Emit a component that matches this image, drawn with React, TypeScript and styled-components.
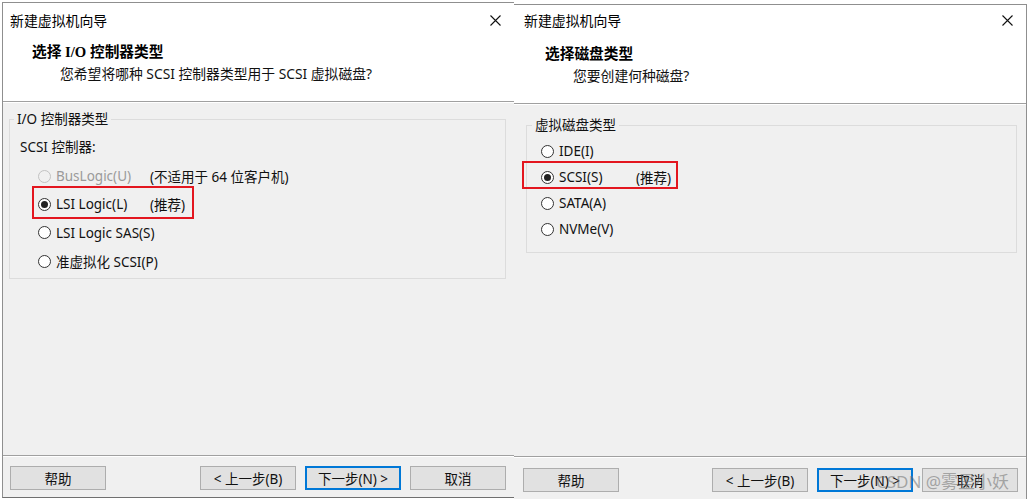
import React from 'react'
import styled, { createGlobalStyle, css } from 'styled-components'

const GlobalStyle = createGlobalStyle`
  html, body {
    margin: 0;
    background: #fff;
  }
  body {
    font-family: "Noto Sans", "Noto Sans CJK SC", sans-serif;
    font-size: 13.5px;
    color: #111;
  }
`

type Rect = { left: number; top: number; width: number; height: number }

type Option = {
    label: string
    note?: string
    checked?: boolean
    disabled?: boolean
    highlight?: Rect
}

type Wizard = {
    top: number
    left: number
    width: number
    height: number
    edges: { left: boolean; right: boolean; bottom: boolean }
    titleHeight: number
    headingGap: number
    headingIndent: number
    subIndent: number
    heading: string
    subtitle: string
    bodyTop: number
    groupInset: number
    groupWidth: number
    groupHeight: number
    legendInset: number
    legend: string
    caption?: string
    rowsTop: number
    rowIndent: number
    rowHeight: number
    labelWidth: number
    options: Option[]
    footerHeight: number
    footerTop: number
    footerSide: number
}

const wizards: Wizard[] = [
    {
        top: 2,
        left: 2,
        width: 512,
        height: 496,
        edges: { left: true, right: false, bottom: true },
        titleHeight: 34,
        headingGap: 5,
        headingIndent: 29,
        subIndent: 57,
        heading: '选择 I/O 控制器类型',
        subtitle: '您希望将哪种 SCSI 控制器类型用于 SCSI 虚拟磁盘?',
        bodyTop: 7,
        groupInset: 6,
        groupWidth: 497,
        groupHeight: 169,
        legendInset: 4,
        legend: 'I/O 控制器类型',
        caption: 'SCSI 控制器:',
        rowsTop: 5,
        rowIndent: 28,
        rowHeight: 28.3,
        labelWidth: 94,
        options: [
            { label: 'BusLogic(U)', note: '(不适用于 64 位客户机)', disabled: true },
            {
                label: 'LSI Logic(L)',
                note: '(推荐)',
                checked: true,
                highlight: { left: 22, top: -4, width: 162, height: 33 },
            },
            { label: 'LSI Logic SAS(S)' },
            { label: '准虚拟化 SCSI(P)' },
        ],
        footerHeight: 42,
        footerTop: 9,
        footerSide: 7,
    },
    {
        top: 4,
        left: 0,
        width: 513,
        height: 495,
        edges: { left: false, right: true, bottom: false },
        titleHeight: 30,
        headingGap: 9,
        headingIndent: 31,
        subIndent: 59,
        heading: '选择磁盘类型',
        subtitle: '您要创建何种磁盘?',
        bodyTop: 11,
        groupInset: 12,
        groupWidth: 491,
        groupHeight: 137,
        legendInset: 5,
        legend: '虚拟磁盘类型',
        rowsTop: 4,
        rowIndent: 14,
        rowHeight: 26,
        labelWidth: 77,
        options: [
            { label: 'IDE(I)' },
            {
                label: 'SCSI(S)',
                note: '(推荐)',
                checked: true,
                highlight: { left: -5, top: -3, width: 156, height: 28 },
            },
            { label: 'SATA(A)' },
            { label: 'NVMe(V)' },
        ],
        footerHeight: 43,
        footerTop: 10,
        footerSide: 9,
    },
]

const Page = styled.div`
    position: relative;
    display: flex;
    align-items: flex-start;
    width: 1028px;
    height: 499px;
    overflow: hidden;
`

const Frame = styled.div<{ $w: Wizard }>`
    display: flex;
    flex-direction: column;
    box-sizing: border-box;
    margin-top: ${p => p.$w.top}px;
    margin-left: ${p => p.$w.left}px;
    width: ${p => p.$w.width}px;
    height: ${p => p.$w.height}px;
    background: #f0f0f0;
    border-top: 1px solid #8f8f8f;
    border-left: ${p => (p.$w.edges.left ? '1px solid #8f8f8f' : 'none')};
    border-right: ${p => (p.$w.edges.right ? '1px solid #8f8f8f' : 'none')};
    border-bottom: ${p => (p.$w.edges.bottom ? '1px solid #6f6f6f' : 'none')};
`

const Header = styled.div`
    display: flex;
    flex-direction: column;
    height: 99px;
    box-sizing: border-box;
    background: #fff;
    border-bottom: 1px solid #a0a0a0;
`

const TitleBar = styled.div<{ $h: number; $pad: number }>`
    display: flex;
    align-items: center;
    justify-content: space-between;
    height: ${p => p.$h}px;
    padding: 0 13px 0 ${p => p.$pad}px;
    font-size: 13.9px;
    color: #000;
`

const CloseIcon = () => (
    <svg width="11" height="11" viewBox="0 0 11 11">
        <path d="M0.5 0.5 L10.5 10.5 M10.5 0.5 L0.5 10.5" stroke="#111" strokeWidth="1.1" />
    </svg>
)

const Heading = styled.div<{ $gap: number; $indent: number }>`
    margin-top: ${p => p.$gap}px;
    padding-left: ${p => p.$indent}px;
    line-height: 20px;
    font-family: "Liberation Serif", "Noto Sans CJK SC", serif;
    font-weight: bold;
    font-size: 14.7px;
    color: #000;
`

const Subtitle = styled.div<{ $indent: number }>`
    margin-top: 2px;
    padding-left: ${p => p.$indent}px;
    line-height: 20px;
    font-size: 13.8px;
    color: #111;
`

const Body = styled.div<{ $top: number }>`
    flex: 1;
    border-top: 1px solid #fff;
    padding-top: ${p => p.$top}px;
`

const Group = styled.fieldset<{ $inset: number; $width: number; $height: number }>`
    box-sizing: border-box;
    margin: 0 0 0 ${p => p.$inset}px;
    padding: 0;
    width: ${p => p.$width}px;
    height: ${p => p.$height}px;
    border: 1px solid #dcdcdc;
    min-width: 0;
`

const Legend = styled.legend<{ $inset: number }>`
    margin-left: ${p => p.$inset}px;
    padding: 0 3px;
    line-height: 18px;
    color: #111;
`

const Caption = styled.div`
    margin: 9px 0 0 10px;
    line-height: 20px;
`

const Rows = styled.div<{ $top: number }>`
    display: flex;
    flex-direction: column;
    margin-top: ${p => p.$top}px;
`

const Row = styled.div<{ $indent: number; $h: number; $hl?: Rect }>`
    position: relative;
    display: flex;
    align-items: center;
    height: ${p => p.$h}px;
    padding-left: ${p => p.$indent}px;
    ${p =>
        p.$hl &&
        css`
            &::after {
                content: '';
                position: absolute;
                box-sizing: border-box;
                left: ${p.$hl.left}px;
                top: ${p.$hl.top}px;
                width: ${p.$hl.width}px;
                height: ${p.$hl.height}px;
                border: 2px solid #e3161f;
                pointer-events: none;
            }
        `}
`

const Radio = styled.span<{ $checked?: boolean; $disabled?: boolean }>`
    position: relative;
    box-sizing: border-box;
    flex: none;
    width: 13px;
    height: 13px;
    border-radius: 50%;
    border: 1px solid ${p => (p.$disabled ? '#c2c2c2' : '#333')};
    background: ${p => (p.$disabled ? '#f0f0f0' : '#fff')};
    margin-right: 5px;
    ${p =>
        p.$checked &&
        css`
            &::after {
                content: '';
                position: absolute;
                left: 2px;
                top: 2px;
                width: 7px;
                height: 7px;
                border-radius: 50%;
                background: #222;
            }
        `}
`

const Label = styled.span<{ $width: number; $disabled?: boolean }>`
    width: ${p => p.$width}px;
    white-space: nowrap;
    color: ${p => (p.$disabled ? '#9a9a9a' : '#111')};
`

const Note = styled.span`
    white-space: nowrap;
    color: #111;
`

const Footer = styled.div<{ $h: number; $top: number; $side: number }>`
    display: flex;
    align-items: flex-start;
    gap: 9px;
    box-sizing: border-box;
    height: ${p => p.$h}px;
    border-top: 1px solid #a0a0a0;
    box-shadow: inset 0 1px 0 #fff;
    padding: ${p => p.$top + 1}px 8px 0 ${p => p.$side}px;
`

const Spacer = styled.div`
    flex: 1;
`

const Button = styled.button<{ $primary?: boolean }>`
    box-sizing: border-box;
    width: 96px;
    height: 24px;
    padding: 0;
    font: inherit;
    font-size: 13.5px;
    color: #111;
    background: #e1e1e1;
    border: 1px solid ${p => (p.$primary ? '#0078d7' : '#adadad')};
    box-shadow: ${p => (p.$primary ? 'inset 0 0 0 1px #0078d7' : 'none')};
`

const Watermark = styled.div`
    position: absolute;
    left: 876px;
    top: 468px;
    font-family: "Noto Sans", "Noto Sans CJK SC", sans-serif;
    font-size: 17px;
    color: rgba(110, 110, 110, 0.55);
    white-space: nowrap;
    pointer-events: none;
`

function WizardDialog({ w }: { w: Wizard }) {
    return (
        <Frame $w={w}>
            <Header>
                <TitleBar $h={w.titleHeight} $pad={w.edges.left ? 7 : 10}>
                    <span>新建虚拟机向导</span>
                    <CloseIcon />
                </TitleBar>
                <Heading $gap={w.headingGap} $indent={w.headingIndent}>{w.heading}</Heading>
                <Subtitle $indent={w.subIndent}>{w.subtitle}</Subtitle>
            </Header>
            <Body $top={w.bodyTop}>
                <Group $inset={w.groupInset} $width={w.groupWidth} $height={w.groupHeight}>
                    <Legend $inset={w.legendInset}>{w.legend}</Legend>
                    {w.caption && <Caption>{w.caption}</Caption>}
                    <Rows $top={w.rowsTop}>
                        {w.options.map(o => (
                            <Row key={o.label} $indent={w.rowIndent} $h={w.rowHeight} $hl={o.highlight}>
                                <Radio $checked={o.checked} $disabled={o.disabled} />
                                <Label $width={w.labelWidth} $disabled={o.disabled}>{o.label}</Label>
                                {o.note && <Note>{o.note}</Note>}
                            </Row>
                        ))}
                    </Rows>
                </Group>
            </Body>
            <Footer $h={w.footerHeight} $top={w.footerTop} $side={w.footerSide}>
                <Button>帮助</Button>
                <Spacer />
                <Button>&lt; 上一步(B)</Button>
                <Button $primary>下一步(N) &gt;</Button>
                <Button>取消</Button>
            </Footer>
        </Frame>
    )
}

export default function App() {
    return (
        <>
            <GlobalStyle />
            <Page>
                {wizards.map(w => (
                    <WizardDialog key={w.heading} w={w} />
                ))}
                <Watermark>CSDN @雾里小妖</Watermark>
            </Page>
        </>
    )
}
